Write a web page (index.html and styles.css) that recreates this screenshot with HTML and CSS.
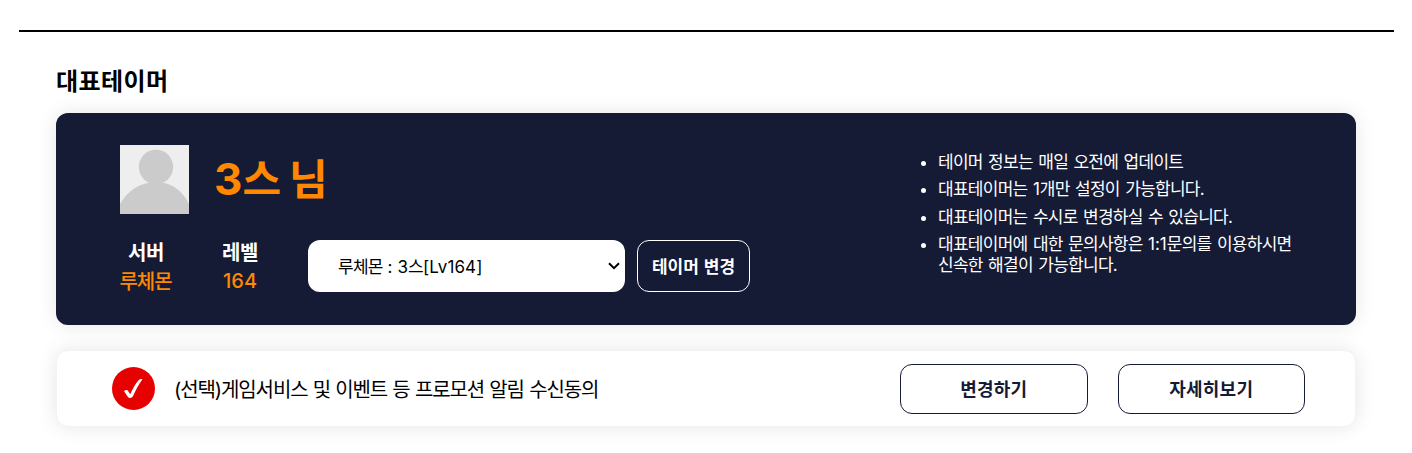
FILE: index.html
```html
<!DOCTYPE html>
<html lang="ko">
<head>
  <meta charset="UTF-8" />
  <meta name="viewport" content="width=device-width, initial-scale=1.0"/>
  <title>대표테이머</title>
  <link rel="stylesheet" href="styles.css">
</head>
<body>
  <div class="mypage">
    <h2 class="section-title">대표테이머</h2>

    <section class="tamer-card">
      <div class="tamer-info">
        <div class="profile">
          <svg class="avatar" viewBox="0 0 69 69">
            <rect width="69" height="69" fill="#eeeeee"/>
            <circle cx="36" cy="22" r="17.2" fill="#cbcbcb"/>
            <path d="M0 59C7 47 17 39.500 30 37.500V36H42V37.500C54 39.500 63 47 69 59V69H0Z" fill="#cbcbcb"/>
          </svg>
          <strong class="nickname"><span class="num">3</span>스 님</strong>
        </div>

        <div class="tamer-row">
          <dl class="stat server">
            <dt>서버</dt>
            <dd>루체몬</dd>
          </dl>
          <dl class="stat level">
            <dt>레벨</dt>
            <dd class="num">164</dd>
          </dl>
          <button type="button" class="tamer-select">
            <span>루체몬<span class="num"> : 3</span>스<span class="num">[Lv164]</span></span>
            <svg class="arrow" viewBox="0 0 12 8">
              <path d="M1 1.200L6 6.200L11 1.200" fill="none" stroke="#000" stroke-width="2"/>
            </svg>
          </button>
          <button type="button" class="btn-change">테이머 변경</button>
        </div>
      </div>

      <ul class="notice">
        <li>테이머 정보는 매일 오전에 업데이트</li>
        <li>대표테이머는 <span class="num">1</span>개만 설정이 가능합니다.</li>
        <li>대표테이머는 수시로 변경하실 수 있습니다.</li>
        <li>대표테이머에 대한 문의사항은 <span class="num">1:1</span>문의를 이용하시면<br>신속한 해결이 가능합니다.</li>
      </ul>
    </section>

    <section class="agree-card">
      <svg class="check" viewBox="0 0 43 43">
        <circle cx="21.500" cy="21.500" r="21.500" fill="#e60000"/>
        <path d="M12 24.200Q13.500 22.300 15.600 23.300L18.200 27.200Q22.500 17.500 26.800 12.900Q28.500 11.700 30.500 12.300Q25.500 19 20.800 29.600Q20 31 18 30.900Q16.500 30.900 15.800 29.700Z" fill="#fff"/>
      </svg>
      <p class="agree-text">(선택)게임서비스 및 이벤트 등 프로모션 알림 수신동의</p>
      <div class="agree-buttons">
        <button type="button">변경하기</button>
        <button type="button">자세히보기</button>
      </div>
    </section>
  </div>
</body>
</html>
```

FILE: styles.css
```css
* {
  margin: 0;
  padding: 0;
  box-sizing: border-box;
}

body {
  background-color: #fff;
  color: #000;
  font-family: Inter, "Noto Sans CJK KR", sans-serif;
}

button {
  font-family: inherit;
  cursor: pointer;
}

.num {
  letter-spacing: 0;
}

.mypage {
  width: 1375px;
  height: 423px;
  margin: 30px 0 0 19px;
  padding: 32px 38px 0 37px;
  border-top: 2px solid #000;
}

.section-title {
  height: 49px;
  font-size: 24px;
  line-height: 36px;
  letter-spacing: 0.4px;
}

.tamer-card {
  display: flex;
  justify-content: space-between;
  height: 212px;
  padding: 32px 64px;
  border-radius: 12px;
  background-color: #151a35;
  color: #fff;
  box-shadow: 0 0 20px rgba(0, 0, 0, 0.1);
}

.profile {
  display: flex;
  gap: 25px;
  height: 69px;
}

.avatar {
  width: 69px;
  height: 69px;
}

.nickname {
  color: #ff8800;
  font-size: 42px;
  line-height: 68px;
  letter-spacing: -1.5px;
  word-spacing: 1px;
}

.nickname .num {
  font-size: 44px;
}

.tamer-row {
  display: flex;
  align-items: flex-start;
  margin-top: 26px;
}

.stat {
  font-size: 20px;
  line-height: 28px;
  text-align: center;
  white-space: nowrap;
}

.stat dt {
  height: 28px;
  line-height: 26px;
  font-weight: 700;
  letter-spacing: -0.4px;
}

.stat dd {
  color: #ff8800;
  font-weight: 500;
}

.server {
  width: 52px;
}

.server dd {
  margin-left: -1px;
  letter-spacing: -1.1px;
}

.level {
  width: 36px;
  margin: 0 50px;
}

.level dd {
  line-height: 26px;
}

.tamer-select {
  display: flex;
  justify-content: space-between;
  align-items: center;
  width: 317px;
  height: 52px;
  padding: 0 5px 0 30px;
  border: none;
  border-radius: 12px;
  background-color: #fff;
  color: #000;
  font-size: 17px;
  letter-spacing: -0.75px;
}

.tamer-select > span {
  padding-bottom: 2px;
}

.tamer-select .num {
  letter-spacing: 0.1px;
}

.arrow {
  width: 12px;
  height: 8px;
}

.btn-change {
  width: 113px;
  height: 52px;
  padding-bottom: 2px;
  margin-left: 12px;
  border: 1px solid #fff;
  border-radius: 12px;
  background: none;
  color: #fff;
  font-size: 17px;
  font-weight: 700;
  word-spacing: 1px;
}

.notice {
  width: 354px;
  margin-top: 7px;
  font-size: 17px;
  line-height: 20.4px;
  letter-spacing: -0.72px;
  word-spacing: 1.3px;
  white-space: nowrap;
}

.notice li {
  margin-bottom: 7px;
}

.agree-card {
  display: flex;
  align-items: center;
  height: 77px;
  margin-top: 25px;
  padding: 0 50px 0 55px;
  border: 1px solid #f3f3f3;
  border-radius: 12px;
  background-color: #fff;
  box-shadow: 0 0 20px rgba(0, 0, 0, 0.1);
}

.check {
  width: 43px;
  height: 43px;
}

.agree-text {
  margin-left: 19px;
  font-size: 20px;
  letter-spacing: -1.1px;
  word-spacing: 0.7px;
}

.agree-buttons {
  display: flex;
  gap: 30px;
  margin-left: auto;
}

.agree-buttons button {
  width: 187.5px;
  height: 50px;
  padding-bottom: 2px;
  border: 1px solid #151a35;
  border-radius: 12px;
  background-color: #fff;
  color: #151a35;
  font-size: 18px;
  font-weight: 700;
  letter-spacing: 0.2px;
}
```
